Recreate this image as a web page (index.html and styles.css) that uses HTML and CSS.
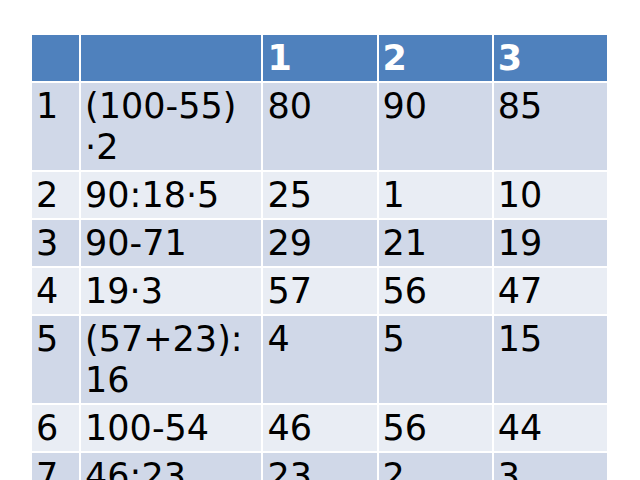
FILE: index.html
```html
<!DOCTYPE html>
<html>
<head>
<meta charset="utf-8">
<link rel="stylesheet" href="styles.css">
</head>
<body>
<div class="page">
<table class="grid">
<colgroup>
<col class="c-num"><col class="c-expr"><col class="c-val"><col class="c-val"><col class="c-val">
</colgroup>
<thead>
<tr><th></th><th></th><th>1</th><th>2</th><th>3</th></tr>
</thead>
<tbody>
<tr><td>1</td><td>(100-55)<br>·2</td><td>80</td><td>90</td><td>85</td></tr>
<tr><td>2</td><td>90:18·5</td><td>25</td><td>1</td><td>10</td></tr>
<tr><td>3</td><td>90-71</td><td>29</td><td>21</td><td>19</td></tr>
<tr><td>4</td><td>19·3</td><td>57</td><td>56</td><td>47</td></tr>
<tr><td>5</td><td>(57+23):<br>16</td><td>4</td><td>5</td><td>15</td></tr>
<tr><td>6</td><td>100-54</td><td>46</td><td>56</td><td>44</td></tr>
<tr><td>7</td><td>46:23</td><td>23</td><td>2</td><td>3</td></tr>
</tbody>
</table>
</div>
</body>
</html>
```

FILE: styles.css
```css
html, body {
  margin: 0;
  padding: 0;
  background: #ffffff;
  overflow: hidden;
}
.page {
  padding: 33px 0 0 30px;
  font-family: "DejaVu Sans", sans-serif;
}
.grid {
  table-layout: fixed;
  border-collapse: separate;
  border-spacing: 2px;
  width: 579px;
  font-size: 35px;
  line-height: 41px;
}
.c-num { width: 47px; }
.c-expr { width: 180px; }
.c-val { width: 113px; }
.grid th, .grid td {
  box-sizing: border-box;
  padding: 3px 4px 2px 4px;
  text-align: left;
  vertical-align: top;
  white-space: nowrap;
  overflow: hidden;
}
.grid th {
  background: #4f81bd;
  color: #ffffff;
  font-weight: bold;
}
.grid td {
  color: #000000;
}
.grid tbody tr:nth-child(odd) td {
  background: #d0d8e8;
}
.grid tbody tr:nth-child(even) td {
  background: #e9edf4;
}
```
